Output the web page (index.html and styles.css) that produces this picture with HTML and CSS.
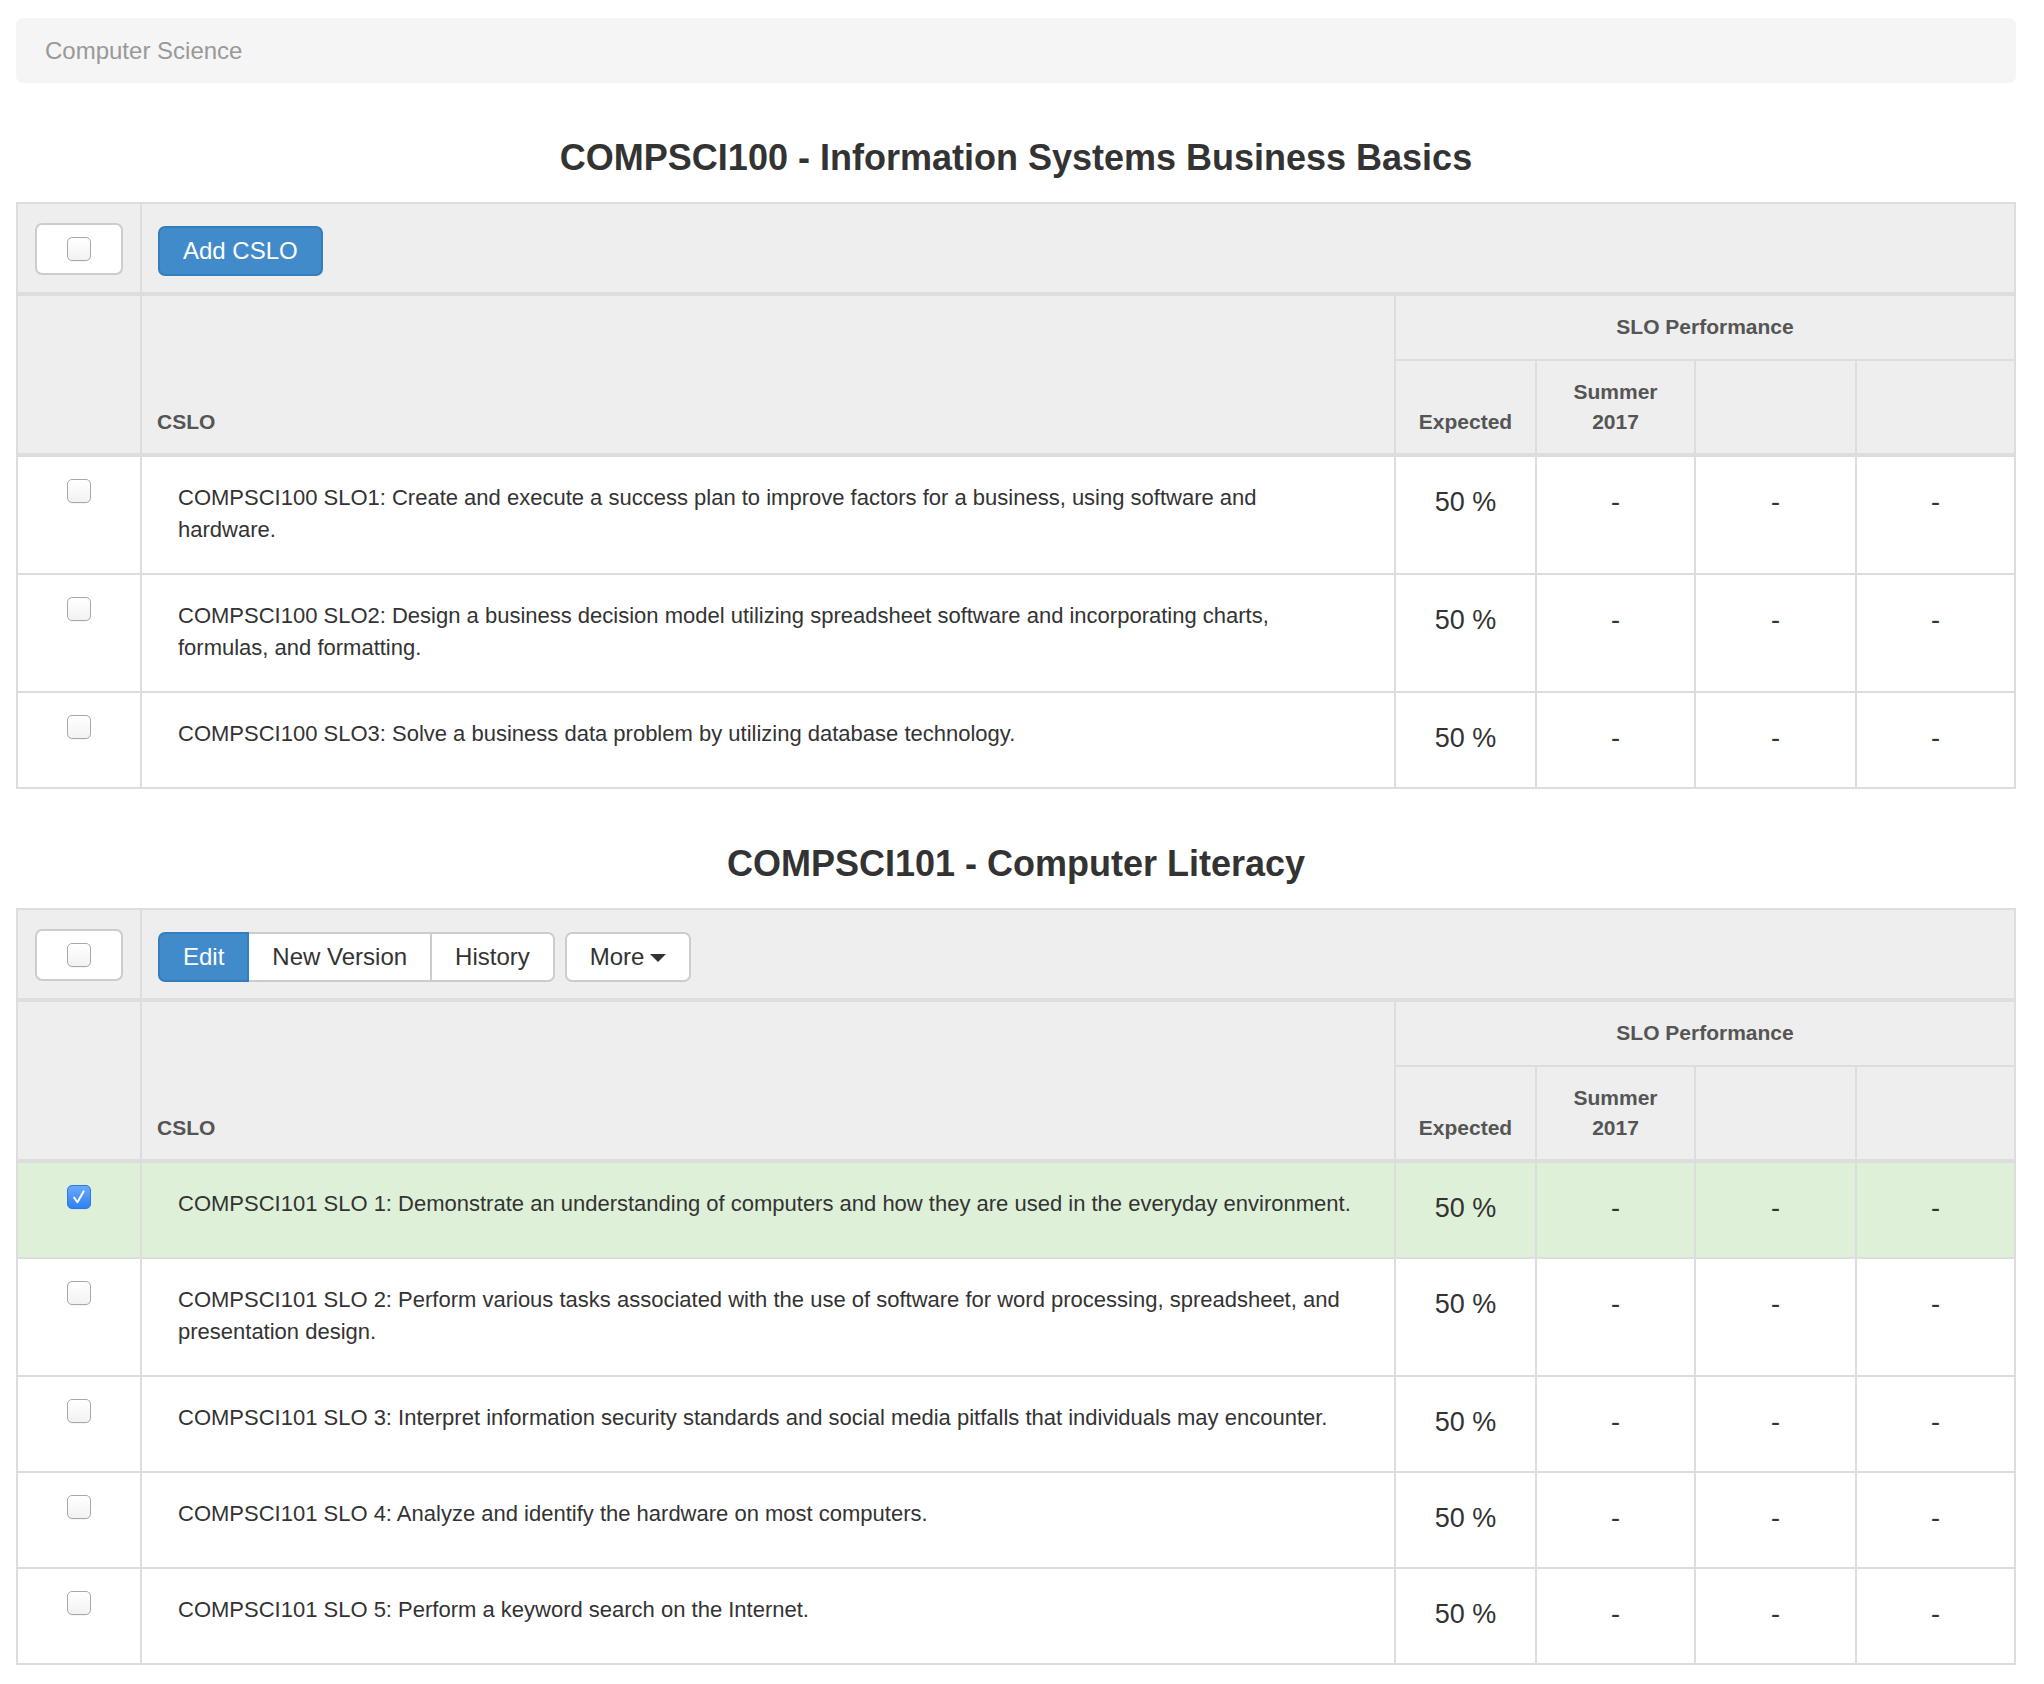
FILE: index.html
```html
<!DOCTYPE html>
<html lang="en">
<head>
<meta charset="utf-8">
<title>Computer Science – Course SLOs</title>
<link rel="stylesheet" href="styles.css">
</head>
<body>
<div class="page">
  <nav class="breadcrumb"><span class="crumb">Computer Science</span></nav>

  <section class="course">
    <h2 class="course-title">COMPSCI100 - Information Systems Business Basics</h2>
    <table class="slo-table">
      <colgroup>
        <col class="col-select"><col class="col-cslo"><col class="col-expected"><col class="col-term"><col class="col-term-b"><col class="col-term">
      </colgroup>
      <thead>
        <tr class="toolbar">
          <td class="tb-select"><span class="select-all"><span class="cb"></span></span></td>
          <td class="tb-actions" colspan="5">
            <div class="btn-toolbar"><button class="btn btn-primary btn-solo">Add CSLO</button></div>
          </td>
        </tr>
        <tr class="head-1">
          <th rowspan="2" class="h-select"></th>
          <th rowspan="2" class="h-cslo">CSLO</th>
          <th colspan="4" class="h-group">SLO Performance</th>
        </tr>
        <tr class="head-2">
          <th>Expected</th><th>Summer<br>2017</th><th></th><th></th>
        </tr>
      </thead>
      <tbody>
        <tr class="row">
          <td class="c-check"><span class="cb"></span></td>
          <td class="c-text">COMPSCI100 SLO1: Create and execute a success plan to improve factors for a business, using software and hardware.</td>
          <td class="c-num">50 %</td><td class="c-num">-</td><td class="c-num">-</td><td class="c-num">-</td>
        </tr>
        <tr class="row">
          <td class="c-check"><span class="cb"></span></td>
          <td class="c-text">COMPSCI100 SLO2: Design a business decision model utilizing spreadsheet software and incorporating charts, formulas, and formatting.</td>
          <td class="c-num">50 %</td><td class="c-num">-</td><td class="c-num">-</td><td class="c-num">-</td>
        </tr>
        <tr class="row">
          <td class="c-check"><span class="cb"></span></td>
          <td class="c-text">COMPSCI100 SLO3: Solve a business data problem by utilizing database technology.</td>
          <td class="c-num">50 %</td><td class="c-num">-</td><td class="c-num">-</td><td class="c-num">-</td>
        </tr>
      </tbody>
    </table>
  </section>

  <section class="course">
    <h2 class="course-title">COMPSCI101 - Computer Literacy</h2>
    <table class="slo-table">
      <colgroup>
        <col class="col-select"><col class="col-cslo"><col class="col-expected"><col class="col-term"><col class="col-term-b"><col class="col-term">
      </colgroup>
      <thead>
        <tr class="toolbar">
          <td class="tb-select"><span class="select-all"><span class="cb"></span></span></td>
          <td class="tb-actions" colspan="5">
            <div class="btn-toolbar">
              <div class="btn-group">
                <button class="btn btn-primary">Edit</button><button class="btn">New Version</button><button class="btn">History</button>
              </div>
              <button class="btn btn-solo dropdown-toggle">More <span class="caret"></span></button>
            </div>
          </td>
        </tr>
        <tr class="head-1">
          <th rowspan="2" class="h-select"></th>
          <th rowspan="2" class="h-cslo">CSLO</th>
          <th colspan="4" class="h-group">SLO Performance</th>
        </tr>
        <tr class="head-2">
          <th>Expected</th><th>Summer<br>2017</th><th></th><th></th>
        </tr>
      </thead>
      <tbody>
        <tr class="row selected">
          <td class="c-check"><span class="cb checked"><svg viewBox="0 0 24 24" width="24" height="24" aria-hidden="true"><path d="M7.2 12.6 L10.4 17.2 L16.6 6.4" fill="none" stroke="#fff" stroke-width="2" stroke-linecap="round" stroke-linejoin="round"/></svg></span></td>
          <td class="c-text">COMPSCI101 SLO 1: Demonstrate an understanding of computers and how they are used in the everyday environment.</td>
          <td class="c-num">50 %</td><td class="c-num">-</td><td class="c-num">-</td><td class="c-num">-</td>
        </tr>
        <tr class="row">
          <td class="c-check"><span class="cb"></span></td>
          <td class="c-text">COMPSCI101 SLO 2: Perform various tasks associated with the use of software for word processing, spreadsheet, and presentation design.</td>
          <td class="c-num">50 %</td><td class="c-num">-</td><td class="c-num">-</td><td class="c-num">-</td>
        </tr>
        <tr class="row">
          <td class="c-check"><span class="cb"></span></td>
          <td class="c-text">COMPSCI101 SLO 3: Interpret information security standards and social media pitfalls that individuals may encounter.</td>
          <td class="c-num">50 %</td><td class="c-num">-</td><td class="c-num">-</td><td class="c-num">-</td>
        </tr>
        <tr class="row">
          <td class="c-check"><span class="cb"></span></td>
          <td class="c-text">COMPSCI101 SLO 4: Analyze and identify the hardware on most computers.</td>
          <td class="c-num">50 %</td><td class="c-num">-</td><td class="c-num">-</td><td class="c-num">-</td>
        </tr>
        <tr class="row">
          <td class="c-check"><span class="cb"></span></td>
          <td class="c-text">COMPSCI101 SLO 5: Perform a keyword search on the Internet.</td>
          <td class="c-num">50 %</td><td class="c-num">-</td><td class="c-num">-</td><td class="c-num">-</td>
        </tr>
      </tbody>
    </table>
  </section>
</div>
</body>
</html>
```

FILE: styles.css
```css
* { box-sizing: border-box; }

html, body {
  margin: 0;
  background: #fff;
}

body {
  font-family: "Liberation Sans", Arial, Helvetica, sans-serif;
  color: #333;
  font-size: 22px;
  line-height: 32px;
}

.page {
  width: 2000px;
  margin-left: 16px;
  padding-top: 18px;
  padding-bottom: 20px;
}

/* breadcrumb */
.breadcrumb {
  display: flex;
  align-items: center;
  height: 65px;
  padding: 0 29px;
  background: #f5f5f5;
  border-radius: 7px;
  font-size: 24px;
  line-height: 34px;
  color: #999;
}

/* course title */
.course-title {
  margin: 55px 0 24px;
  font-size: 36px;
  line-height: 40px;
  font-weight: bold;
  text-align: center;
  color: #333;
}

/* table */
.slo-table {
  width: 2000px;
  table-layout: fixed;
  border-collapse: collapse;
  border: 2px solid #ddd;
}

.col-select { width: 124px; }
.col-cslo { width: 1254px; }
.col-expected { width: 141px; }
.col-term { width: 159px; }
.col-term-b { width: 161px; }

.slo-table th,
.slo-table td {
  border: 2px solid #ddd;
  vertical-align: top;
}

/* toolbar row */
.slo-table .toolbar td {
  background: #eee;
  border-bottom-width: 4px;
}

.slo-table .tb-select {
  padding: 19px 0 17px;
  text-align: center;
}

.select-all {
  display: inline-flex;
  align-items: center;
  justify-content: center;
  width: 88px;
  height: 52px;
  background: #fff;
  border: 2px solid #ccc;
  border-radius: 7px;
  vertical-align: top;
}

.slo-table .tb-actions {
  padding: 22px 16px 16px;
}

.btn-toolbar {
  display: flex;
  align-items: flex-start;
  gap: 10px;
}

.btn-group {
  display: flex;
}

.btn {
  display: inline-flex;
  align-items: center;
  height: 50px;
  margin: 0;
  padding: 0 23px;
  font-family: "Liberation Sans", Arial, Helvetica, sans-serif;
  font-size: 24px;
  line-height: 46px;
  color: #333;
  background: #fff;
  border: 2px solid #ccc;
  border-radius: 0;
  cursor: pointer;
}

.btn-primary {
  color: #fff;
  background: #428bca;
  border-color: #357ebd;
}

.btn-solo {
  border-radius: 7px;
}

.btn-group .btn + .btn {
  margin-left: -2px;
}

.btn-group .btn:first-child {
  border-radius: 7px 0 0 7px;
  position: relative;
  z-index: 1;
}

.btn-group .btn:last-child {
  border-radius: 0 7px 7px 0;
}

.caret {
  display: inline-block;
  width: 0;
  height: 0;
  margin-left: 6px;
  margin-top: 2px;
  border-top: 8px solid #333;
  border-left: 8px solid transparent;
  border-right: 8px solid transparent;
}

/* header rows */
.slo-table .head-1 th,
.slo-table .head-2 th {
  background: #eee;
  color: #555;
  font-size: 21px;
  line-height: 30px;
  font-weight: bold;
  text-align: center;
}

.slo-table .head-1 th {
  padding: 16px 15px 17px;
}

.slo-table .head-1 .h-select,
.slo-table .head-1 .h-cslo {
  border-bottom-width: 4px;
  vertical-align: bottom;
}

.slo-table .head-1 .h-cslo {
  text-align: left;
  padding: 0 15px 16px;
}

.slo-table .head-2 th {
  padding: 16px 6px;
  vertical-align: bottom;
  border-bottom-width: 4px;
}

/* checkbox */
.cb {
  display: block;
  width: 24px;
  height: 24px;
  margin: 0 auto;
  border: 1.5px solid #a8a8a8;
  border-radius: 5px;
  background: linear-gradient(#ffffff, #f2f2f2);
  box-shadow: 0 0.5px 0.5px rgba(0, 0, 0, 0.08);
}

.select-all .cb {
  margin: 0;
}

.cb.checked {
  border-color: #2e78e6;
  background: linear-gradient(#69aafc, #2f80f3);
}

.cb.checked svg {
  display: block;
  margin: -1.5px;
}

/* body rows */
.slo-table .row td {
  background: #fff;
}

.slo-table .row.selected td {
  background: #dff0d8;
}

.slo-table .c-check {
  padding: 22px 0 0;
  text-align: center;
}

.slo-table .c-text {
  padding: 25px 40px 27px 36px;
  font-size: 22px;
  line-height: 32px;
}

.slo-table .c-num {
  padding: 26px 4px 30px;
  text-align: center;
  font-size: 27px;
  line-height: 38px;
}
```
